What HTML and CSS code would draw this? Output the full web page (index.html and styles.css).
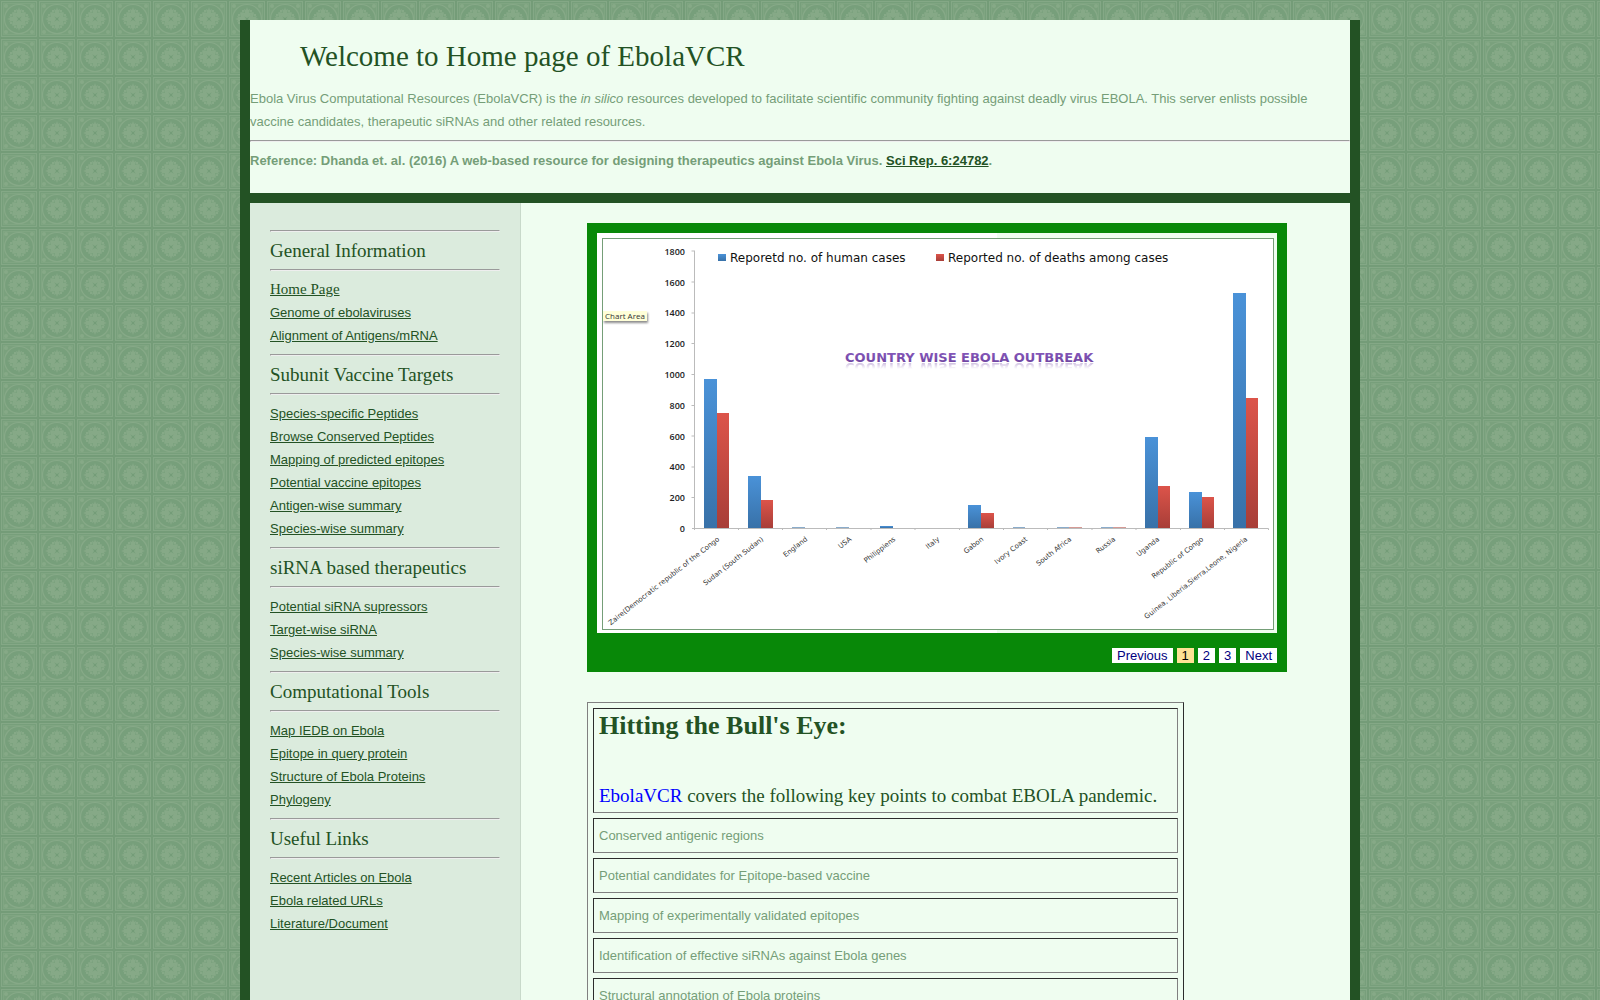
FILE: index.html
```html
<!DOCTYPE html>
<html lang="en">
<head>
  <meta charset="UTF-8" />
  <meta name="viewport" content="width=device-width, initial-scale=1.0" />
  <title>EbolaVCR</title>
  <link rel="stylesheet" href="styles.css">
</head>
<body>
<div class="wrapper">
  <header>
    <h1>Welcome to Home page of EbolaVCR</h1>
    <p>Ebola Virus Computational Resources (EbolaVCR) is the <i>in silico</i> resources developed to facilitate scientific community fighting against deadly virus EBOLA. This server enlists possible vaccine candidates, therapeutic siRNAs and other related resources.</p>
    <hr>
    <p><b>Reference: Dhanda et. al. (2016) A web-based resource for designing therapeutics against Ebola Virus. <a href="#">Sci Rep. 6:24782</a>.</b></p>
  </header>

  <div class="columns">
    <nav class="sidebar">
      <hr>
      <h2>General Information</h2>
      <hr>
      <ul>
        <li><a href="#" class="home">Home Page</a></li>
        <li><a href="#">Genome of ebolaviruses</a></li>
        <li><a href="#">Alignment of Antigens/mRNA</a></li>
      </ul>
      <hr>
      <h2>Subunit Vaccine Targets</h2>
      <hr>
      <ul>
        <li><a href="#">Species-specific Peptides</a></li>
        <li><a href="#">Browse Conserved Peptides</a></li>
        <li><a href="#">Mapping of predicted epitopes</a></li>
        <li><a href="#">Potential vaccine epitopes</a></li>
        <li><a href="#">Antigen-wise summary</a></li>
        <li><a href="#">Species-wise summary</a></li>
      </ul>
      <hr>
      <h2>siRNA based therapeutics</h2>
      <hr>
      <ul>
        <li><a href="#">Potential siRNA supressors</a></li>
        <li><a href="#">Target-wise siRNA</a></li>
        <li><a href="#">Species-wise summary</a></li>
      </ul>
      <hr>
      <h2>Computational Tools</h2>
      <hr>
      <ul>
        <li><a href="#">Map IEDB on Ebola</a></li>
        <li><a href="#">Epitope in query protein</a></li>
        <li><a href="#">Structure of Ebola Proteins</a></li>
        <li><a href="#">Phylogeny</a></li>
      </ul>
      <hr>
      <h2>Useful Links</h2>
      <hr>
      <ul>
        <li><a href="#">Recent Articles on Ebola</a></li>
        <li><a href="#">Ebola related URLs</a></li>
        <li><a href="#">Literature/Document</a></li>
      </ul>
    </nav>

    <main>
      <div class="slider">
        <div class="slide">
          <svg class="chart" viewBox="0 0 670 390" role="img" aria-label="Country wise Ebola outbreak">
            <defs>
              <linearGradient id="blue" x1="0" y1="0" x2="0" y2="1">
                <stop offset="0" stop-color="#4a92d8"/>
                <stop offset="1" stop-color="#3871a8"/>
              </linearGradient>
              <linearGradient id="red" x1="0" y1="0" x2="0" y2="1">
                <stop offset="0" stop-color="#dc544a"/>
                <stop offset="1" stop-color="#a83e38"/>
              </linearGradient>
              <linearGradient id="purple" x1="0" y1="0" x2="0" y2="1">
                <stop offset="0" stop-color="#8a5cc0"/>
                <stop offset="1" stop-color="#6a409c"/>
              </linearGradient>
              <linearGradient id="fade" x1="0" y1="0" x2="0" y2="1">
                <stop offset="0" stop-color="#fff" stop-opacity=".4"/>
                <stop offset="1" stop-color="#fff" stop-opacity="0"/>
              </linearGradient>
              <mask id="reflection" maskUnits="userSpaceOnUse" x="230" y="123" width="280" height="7">
                <rect x="230" y="123" width="280" height="7" fill="url(#fade)"/>
              </mask>
              <filter id="shadow" x="-10%" y="-20%" width="130%" height="170%">
                <feDropShadow dx="1" dy="2" stdDeviation="1" flood-opacity=".45"/>
              </filter>
            </defs>

            <!-- axes -->
            <path class="axis" d="M91.500 11.500V291M89 289.500H665.500V291M88.500 12H91M88.500 43H91M88.500 74H91M88.500 104.500H91M88.500 135.500H91M88.500 166.500H91M88.500 197H91M88.500 228H91M88.500 258.500H91M135.500 289V291M179.500 289V291M223.500 289V291M268 289V291M312 289V291M356.500 289V291M400.500 289V291M444.500 289V291M489 289V291M533 289V291M577.500 289V291M621.500 289V291"/>
            <g class="scale">
              <text x="82" y="16">1800</text>
              <text x="82" y="47">1600</text>
              <text x="82" y="77">1400</text>
              <text x="82" y="108">1200</text>
              <text x="82" y="139">1000</text>
              <text x="82" y="170">800</text>
              <text x="82" y="201">600</text>
              <text x="82" y="231">400</text>
              <text x="82" y="262">200</text>
              <text x="82" y="293">0</text>
            </g>

            <!-- bars -->
            <g fill="url(#blue)">
              <rect x="101" y="140" width="13" height="149"/>
              <rect x="145" y="237" width="13" height="52"/>
              <rect x="277" y="287" width="13" height="2"/>
              <rect x="365" y="266" width="13" height="23"/>
              <rect x="542" y="198" width="13" height="91"/>
              <rect x="586" y="253" width="13" height="36"/>
              <rect x="630" y="54" width="13" height="235"/>
            </g>
            <g fill="url(#red)">
              <rect x="114" y="174" width="12" height="115"/>
              <rect x="158" y="261" width="12" height="28"/>
              <rect x="378" y="274" width="13" height="15"/>
              <rect x="555" y="247" width="12" height="42"/>
              <rect x="599" y="258" width="12" height="31"/>
              <rect x="643" y="159" width="12" height="130"/>
            </g>
            <path d="M189 288.500H202M233 288.500H246M410 288.500H422M454 288.500H466M498 288.500H510" stroke="#8aaccb"/>
            <path d="M466 288.500H479M510 288.500H523" stroke="#d59a95"/>

            <!-- legend -->
            <rect x="115" y="15" width="8" height="7" fill="url(#blue)"/>
            <text class="legend" x="127" y="23">Reporetd no. of human cases</text>
            <rect x="333" y="15" width="8" height="7" fill="url(#red)"/>
            <text class="legend" x="345" y="23">Reported no. of deaths among cases</text>

            <text id="caption" class="caption" x="242" y="123">COUNTRY WISE EBOLA OUTBREAK</text>
            <g mask="url(#reflection)"><use href="#caption" transform="matrix(1 0 0 -1 0 247)"/></g>

            <rect x="0" y="72" width="44" height="10" fill="#ffffd8" filter="url(#shadow)"/>
            <text class="tip" x="2" y="80">Chart Area</text>

            <g class="countries">
              <text transform="translate(117 301) rotate(-38)">Zaire(Democratic republic of the Congo</text>
              <text transform="translate(161 301) rotate(-38)">Sudan (South Sudan)</text>
              <text transform="translate(205 301) rotate(-38)">England</text>
              <text transform="translate(249 301) rotate(-38)">USA</text>
              <text transform="translate(293 301) rotate(-38)">Philippiens</text>
              <text transform="translate(337 301) rotate(-38)">Italy</text>
              <text transform="translate(381 301) rotate(-38)">Gabon</text>
              <text transform="translate(425 301) rotate(-38)">Ivory Coast</text>
              <text transform="translate(469 301) rotate(-38)">South Africa</text>
              <text transform="translate(513 301) rotate(-38)">Russia</text>
              <text transform="translate(557 301) rotate(-38)">Uganda</text>
              <text transform="translate(601 301) rotate(-38)">Republic of Congo</text>
              <text transform="translate(645 301) rotate(-38)">Guinea, Liberia,Sierra,Leone, Nigeria</text>
            </g>
          </svg>
        </div>
        <div class="pager">
          <a href="#">Previous</a>
          <a href="#" class="active">1</a>
          <a href="#">2</a>
          <a href="#">3</a>
          <a href="#">Next</a>
        </div>
      </div>

      <table class="points">
        <tr><th><h2>Hitting the Bull's Eye:</h2><h3><span>EbolaVCR</span> covers the following key points to combat EBOLA pandemic.</h3></th></tr>
        <tr><td>Conserved antigenic regions</td></tr>
        <tr><td>Potential candidates for Epitope-based vaccine</td></tr>
        <tr><td>Mapping of experimentally validated epitopes</td></tr>
        <tr><td>Identification of effective siRNAs against Ebola genes</td></tr>
        <tr><td>Structural annotation of Ebola proteins</td></tr>
      </table>
    </main>
  </div>
</div>
</body>
</html>
```
FILE: styles.css
```css
body {
  margin: 0;
  padding: 20px 0;
  font: 13px/23px "Liberation Sans", Arial, sans-serif;
  color: #759e78;
  background-color: #749c78;
  background-image: url("data:image/svg+xml,%3Csvg xmlns='http://www.w3.org/2000/svg' width='38' height='38'%3E%3Crect x='1' y='1' width='36' height='36' fill='%2384a886'/%3E%3Crect x='2' y='2' width='34' height='34' fill='%23779f7b'/%3E%3Crect x='3' y='3' width='32' height='32' fill='%2380a582'/%3E%3Crect x='4' y='4' width='30' height='30' fill='%237aa17d'/%3E%3Ccircle cx='19' cy='19' r='14.500' fill='%23779f7b' stroke='%2386a987' stroke-width='1.200'/%3E%3Cg fill='%2386a987'%3E%3Ccircle cx='6' cy='6' r='2'/%3E%3Ccircle cx='32' cy='6' r='2'/%3E%3Ccircle cx='6' cy='32' r='2'/%3E%3Ccircle cx='32' cy='32' r='2'/%3E%3Cpath d='M10 14h2v2h-2zM14 10h2v2h-2zM22 10h2v2h-2zM26 14h2v2h-2zM10 22h2v2h-2zM14 26h2v2h-2zM22 26h2v2h-2zM26 22h2v2h-2z'/%3E%3Cg id='a'%3E%3Cpath d='M19 7l1 3 2-1-1 4 3-1-2 4-3 2-3-2-2-4 3 1-1-4 2 1z'/%3E%3Cpath d='M17 17l-2-4-2-1-1 1 1 2 4 2z'/%3E%3C/g%3E%3Cuse href='%23a' transform='rotate(90 19 19)'/%3E%3Cuse href='%23a' transform='rotate(180 19 19)'/%3E%3Cuse href='%23a' transform='rotate(270 19 19)'/%3E%3C/g%3E%3Cpath d='M18 18h2v2h-2z' fill='%23749c78'/%3E%3C/svg%3E");
}
a {
  color: #235224;
}
h1, h2, h3 {
  margin: 0;
  font-family: "Liberation Serif", "Times New Roman", serif;
  font-weight: normal;
  color: #235224;
}
p {
  margin: 0;
}
hr {
  margin: 7px 0;
}
.wrapper {
  width: 70%;
  box-sizing: border-box;
  margin: 0 auto;
  border: solid #235224;
  border-width: 0 10px;
  background: #effdf0;
}
header {
  padding-bottom: 21px;
  border-bottom: 10px solid #235224;
}
h1 {
  padding: 19px 50px 14px;
  font-size: 29px;
  line-height: 34px;
}
.columns {
  display: flex;
}
.sidebar {
  flex: 0 0 230px;
  padding: 20px 20px 80px;
  border-right: 1px solid #c8d9ca;
  background: #dbebdd;
}
.sidebar h2 {
  font-size: 19px;
  line-height: 23px;
}
.sidebar ul {
  margin: 0;
  padding: 0;
  list-style: none;
}
.sidebar .home {
  font-family: "Liberation Serif", "Times New Roman", serif;
  font-size: 15px;
}
main {
  flex: 1;
  padding: 20px 0 20px 66px;
}
.slider {
  max-width: 680px;
  padding: 10px 10px 9px;
  background: #088808;
}
.slide {
  padding: 5px 3px 3px 5px;
  background: linear-gradient(90deg, #fff 400px, #effdf0 400px);
}
.chart {
  display: block;
  box-sizing: border-box;
  width: 100%;
  border: 1px solid #759e78;
  background: #fff;
  font-family: "DejaVu Sans", sans-serif;
}
.axis {
  fill: none;
  stroke: #bbb;
}
.scale {
  font-family: "Open Sans", sans-serif;
  font-size: 9px;
  font-weight: 600;
  text-anchor: end;
  fill: #222;
}
.legend {
  font-size: 12px;
  fill: #111;
}
.caption {
  font-size: 13px;
  font-weight: bold;
  fill: url(#purple);
}
.tip {
  font-family: "Open Sans", sans-serif;
  font-size: 8px;
  fill: #333;
}
.countries {
  font-size: 7px;
  text-anchor: end;
  fill: #333;
}
.pager {
  display: flex;
  justify-content: flex-end;
  gap: 4px;
  padding-top: 15px;
}
.pager a {
  padding: 0 5px;
  line-height: 15px;
  color: #000080;
  background: #fff;
  text-decoration: none;
}
.pager .active {
  color: #000;
  background: #ffe295;
}
.points {
  min-width: 597px;
  margin-top: 30px;
  border: 1px outset gray;
  border-spacing: 5px;
}
.points th, .points td {
  padding: 5px;
  border: 1px inset gray;
  text-align: left;
}
.points h2 {
  font-size: 26px;
  font-weight: bold;
  line-height: 23px;
}
.points h3 {
  padding-top: 47px;
  font-size: 19px;
  line-height: 23px;
}
.points span {
  color: #00f;
}
```
